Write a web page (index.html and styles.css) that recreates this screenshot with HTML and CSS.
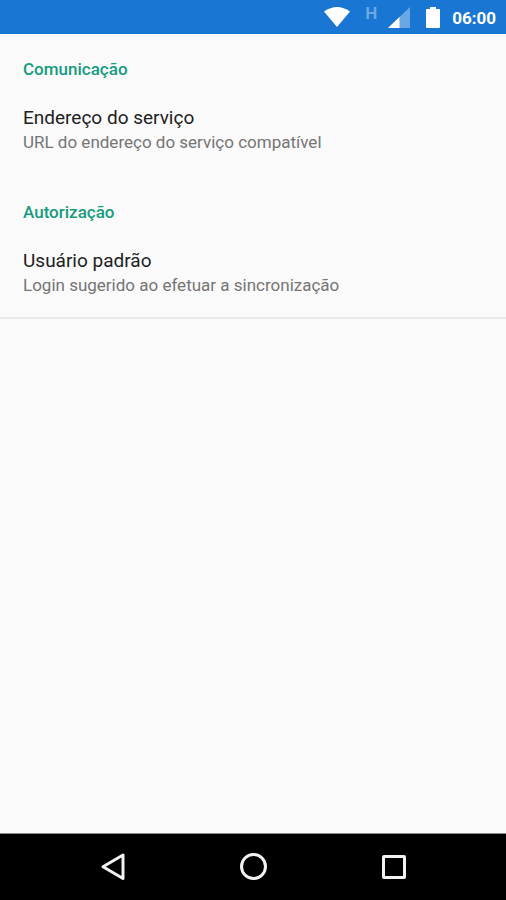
FILE: index.html
```html
<!DOCTYPE html>
<html lang="pt-BR">
<head>
<meta charset="utf-8">
<meta name="viewport" content="width=device-width, initial-scale=1">
<title>Configurações</title>
<link rel="stylesheet" href="styles.css">
</head>
<body>
<header class="status-bar">
  <svg class="wifi" width="26" height="21" viewBox="0 0 26 21" aria-hidden="true"><path d="M0 4.500Q13-4.500 26 4.500L13 20Z" fill="#fff"/></svg>
  <span class="network">H</span>
  <svg class="signal" width="22" height="21" viewBox="0 0 22 21" aria-hidden="true"><path d="M22 0V21H0Z" fill="#6ba7e2"/><path d="M11.500 10V21H0Z" fill="#fff"/></svg>
  <svg class="battery" width="14" height="21" viewBox="0 0 14 21" aria-hidden="true"><path d="M4 0H10V2H13Q14 2 14 3V20Q14 21 13 21H1Q0 21 0 20V3Q0 2 1 2H4Z" fill="#fff"/></svg>
  <time class="clock">06:00</time>
</header>
<main class="settings">
  <section class="group">
    <h2 class="group-title">Comunicação</h2>
    <button class="preference" type="button">
      <span class="title">Endereço do serviço</span>
      <span class="summary">URL do endereço do serviço compatível</span>
    </button>
  </section>
  <section class="group">
    <h2 class="group-title">Autorização</h2>
    <button class="preference" type="button">
      <span class="title">Usuário padrão</span>
      <span class="summary">Login sugerido ao efetuar a sincronização</span>
    </button>
  </section>
</main>
<nav class="nav-bar">
  <button class="nav-button" type="button" aria-label="Voltar"><svg width="28" height="28" viewBox="0 0 28 28"><path d="M25 2V25.500L5 13.750Z"/></svg></button>
  <button class="nav-button" type="button" aria-label="Início"><svg width="28" height="28" viewBox="0 0 28 28"><circle cx="14.500" cy="13.500" r="12"/></svg></button>
  <button class="nav-button" type="button" aria-label="Recentes"><svg width="28" height="28" viewBox="0 0 28 28"><rect x="3.500" y="3.500" width="21" height="21" rx="0.500"/></svg></button>
</nav>
</body>
</html>
```
FILE: styles.css
```css
* {
  box-sizing: border-box;
}

body {
  margin: 0;
  min-height: 100vh;
  display: flex;
  flex-direction: column;
  background: #fafafa;
  font-family: Roboto, "Liberation Sans", sans-serif;
}

button {
  border: 0;
  background: none;
  font: inherit;
  cursor: pointer;
}

.status-bar {
  display: flex;
  align-items: center;
  justify-content: flex-end;
  height: 34px;
  padding: 1px 10px 0 0;
  background: #1976d2;
  color: #fff;
}

.network {
  align-self: flex-start;
  margin: 2px 11px 0 15px;
  color: #6ba7e2;
  font-size: 17px;
  font-weight: 700;
  line-height: 20px;
}

.battery {
  margin: 0 12px 0 16px;
}

.clock {
  font-size: 17px;
  font-weight: 700;
  line-height: 20px;
}

.settings {
  flex: 1;
}

.group {
  padding-bottom: 23px;
}

.group:last-child {
  padding-bottom: 20px;
  border-bottom: 2px solid #e9e9e9;
}

.group-title {
  margin: 0;
  padding: 24px 23px 14px;
  color: #169b7e;
  font-size: 17px;
  font-weight: 500;
  line-height: 22px;
}

.preference {
  display: flex;
  flex-direction: column;
  width: 100%;
  padding: 12px 23px 0;
  text-align: left;
}

.title {
  color: #212121;
  font-size: 19px;
  line-height: 24px;
}

.summary {
  color: #757575;
  font-size: 17px;
  line-height: 24px;
}

.nav-bar {
  display: flex;
  justify-content: center;
  height: 67px;
  border-top: 1px solid #8a8a8a;
  background: #000;
}

.nav-button {
  display: grid;
  place-items: center;
  width: 27.8%;
  padding: 0;
}

.nav-button svg {
  fill: none;
  stroke: #f2f2f2;
  stroke-width: 3;
  stroke-linejoin: round;
}
```
